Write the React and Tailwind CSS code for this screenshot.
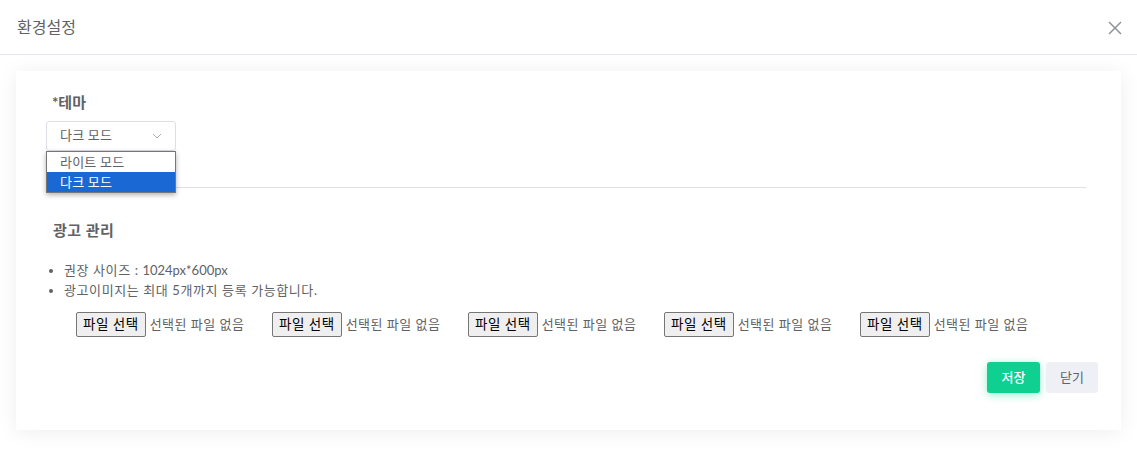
import React from "react";

const FONT = { fontFamily: "Lato, 'Noto Sans CJK KR', 'Noto Sans', sans-serif" };

function FileInput() {
  return (
    <div className="w-[196px] flex items-center shrink-0">
      <span className="h-[25px] px-[6px] flex items-center bg-[#efefef] border border-[#767676] rounded-[2px] text-[13.5px] tracking-[0.5px] text-black">
        파일 선택
      </span>
      <span className="ml-[4px] text-[13px] tracking-[0.5px] text-[#606266]">선택된 파일 없음</span>
    </div>
  );
}

export default function App() {
  return (
    <div className="w-full h-[468px] bg-white overflow-hidden" style={FONT}>
      <div className="h-[55px] border-b border-[#e4e7ed] flex items-center justify-between pl-[17px] pr-[15px]">
        <span className="text-[16px] text-[#606266]">환경설정</span>
        <svg width="14" height="14" viewBox="0 0 14 14" className="mt-[1px]">
          <path d="M1 1L13 13M13 1L1 13" stroke="#909399" strokeWidth="1.5" fill="none" />
        </svg>
      </div>
      <div className="p-4">
        <div className="bg-white h-[359px] shadow-[0_2px_20px_rgba(0,0,0,0.07)] pl-[30px] pr-[23px] pt-[20px]">
          <div className="pl-[6px] h-[22px] leading-[22px] text-[15px] font-bold text-[#606266]">*테마</div>
          <div className="relative mt-[8px] w-[130px] h-[30px] border border-[#dcdfe6] rounded-[3px] flex items-center justify-between pl-[13px] pr-[13px] text-[13px] text-[#606266]">
            <span className="tracking-[0.2px]">다크 모드</span>
            <svg width="10" height="6" viewBox="0 0 10 6">
              <path d="M1 1L5 5L9 1" stroke="#a8abb2" strokeWidth="1" fill="none" />
            </svg>
            <div className="absolute top-[29px] left-[-1px] w-[130px] bg-white border border-[#767676] shadow-[0_2px_5px_rgba(0,0,0,0.3)] z-10 text-[13px] tracking-[0.2px]">
              <div className="h-[20px] leading-[20px] pl-[13px] text-[#606266]">라이트 모드</div>
              <div className="h-[20px] leading-[20px] pl-[13px] bg-[#1a68d3] text-white">다크 모드</div>
            </div>
          </div>
          <div className="mt-[36px] mr-[12px] h-px bg-[#e0e0e0]" />
          <div className="mt-[31px] pl-[7px] h-[22px] leading-[22px] text-[15px] tracking-[0.5px] font-bold text-[#606266]">광고 관리</div>
          <ul className="mt-[19px] list-disc pl-[18px] text-[13px] tracking-[0.6px] leading-[20px] text-[#606266]">
            <li>권장 사이즈 : <span className="tracking-normal">1024px*600px</span></li>
            <li>광고이미지는 최대 5개까지 등록 가능합니다.</li>
          </ul>
          <div className="mt-[12px] pl-[30px] flex">
            <FileInput />
            <FileInput />
            <FileInput />
            <FileInput />
            <FileInput />
          </div>
          <div className="mt-[25px] flex justify-end gap-[6px]">
            <button className="w-[53px] h-[31px] rounded-[3px] bg-[#0fcf91] text-white text-[13px] font-medium shadow-[0_2px_8px_rgba(15,207,145,0.4)]">저장</button>
            <button className="w-[52px] h-[31px] rounded-[3px] bg-[#eef0f5] text-[#606266] text-[13px]">닫기</button>
          </div>
        </div>
      </div>
    </div>
  );
}
